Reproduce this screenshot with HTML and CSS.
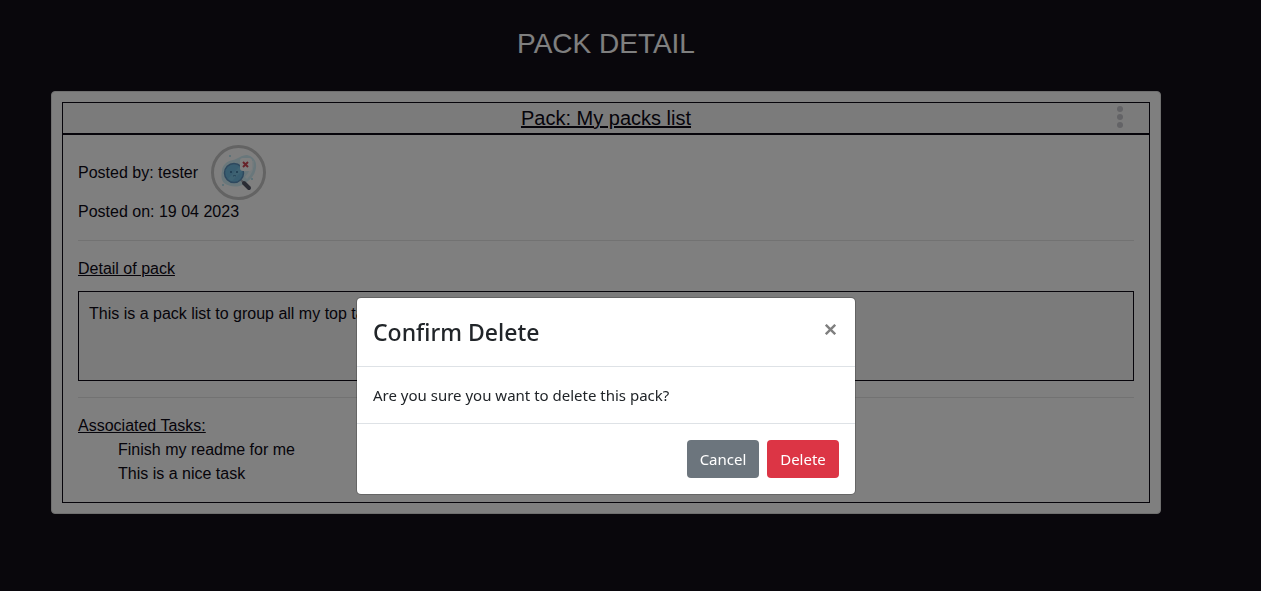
FILE: index.html
```html
<!DOCTYPE html>
<html lang="en">
<head>
<meta charset="utf-8">
<meta name="viewport" content="width=device-width, initial-scale=1">
<title>Pack Detail</title>
<link rel="stylesheet" href="styles.css">
</head>
<body>
<main class="page">
  <h1 class="page-title">PACK DETAIL</h1>
  <section class="card">
    <div class="pack">
      <header class="pack-header">
        <h2 class="pack-title">Pack: My packs list</h2>
        <button class="menu-button" type="button" aria-label="Pack options">
          <svg width="6" height="22" viewBox="0 0 6 22" fill="#c6c6cc"><circle cx="3" cy="3" r="3"/><circle cx="3" cy="11" r="3"/><circle cx="3" cy="19" r="3"/></svg>
        </button>
      </header>
      <div class="pack-body">
        <div class="author">
          <span>Posted by: tester</span>
          <svg class="avatar" viewBox="0 0 49 49" role="img" aria-label="tester">
            <path d="M8 23c0-6 5-10 11-11 5-1 8-5 14-5 6 1 10 6 9 13-1 8-7 13-12 16-6 4-15 3-20-1-3-3-3-8-2-12z" fill="#d3eff7"/>
            <path d="M38 13c1 7-2 13-6 17" fill="none" stroke="#edf9fc" stroke-width="3"/>
            <path d="M27 32l3 3" stroke="#aeb4bd" stroke-width="2"/>
            <path d="M30 35l5 5" stroke="#555869" stroke-width="4" stroke-linecap="round"/>
            <circle cx="20" cy="25" r="9.500" fill="#71bbe0" stroke="#5c91bd" stroke-width="1.500"/>
            <path d="M14 31l11-12 3 4-10 10z" fill="#8ed3ed" opacity=".4"/>
            <circle cx="17" cy="24" r="1" fill="#386f98"/><circle cx="23" cy="24" r="1" fill="#386f98"/>
            <path d="M19 28q2-1 3 0" fill="none" stroke="#4a83ac"/>
            <rect x="26" y="10" width="12" height="13" rx="3" fill="#fff"/>
            <path d="M29 14l5 5m0-5l-5 5" stroke="#cf4555" stroke-width="2"/>
            <g fill="#a6dcec"><circle cx="16" cy="8" r="1"/><circle cx="9" cy="37" r="1"/><circle cx="38" cy="31" r="1"/></g>
          </svg>
        </div>
        <div>Posted on: 19 04 2023</div>
        <hr class="rule">
        <h3 class="label detail-label">Detail of pack</h3>
        <p class="detail">This is a pack list to group all my top tasks</p>
        <hr class="rule">
        <h3 class="label">Associated Tasks:</h3>
        <ul class="tasks">
          <li>Finish my readme for me</li>
          <li>This is a nice task</li>
        </ul>
      </div>
    </div>
  </section>
</main>
<div class="backdrop">
  <div class="modal" role="dialog" aria-modal="true" aria-labelledby="modal-title">
    <header class="modal-header">
      <h2 class="modal-title" id="modal-title">Confirm Delete</h2>
      <button class="close" type="button" aria-label="Close">
        <svg width="11" height="11" viewBox="0 0 11 11" fill="none" stroke="#7f7f7f" stroke-width="2.400"><path d="M.8.8l9.400 9.400M10.200.8L.8 10.200"/></svg>
      </button>
    </header>
    <div class="modal-body">Are you sure you want to delete this pack?</div>
    <footer class="modal-footer">
      <button class="btn btn-secondary" type="button">Cancel</button>
      <button class="btn btn-danger" type="button">Delete</button>
    </footer>
  </div>
</div>
</body>
</html>
```

FILE: styles.css
```css
* { box-sizing: border-box; }
body {
  margin: 0;
  background: #120e19;
  color: #0c0814;
  font: 16px/24px "Liberation Sans", Arial, sans-serif;
}
h1, h2, h3, p, ul { margin: 0; padding: 0; font-weight: 400; }
button { font-family: inherit; cursor: pointer; }

.page { padding: 27px 100px 27px 51px; }
.page-title {
  margin-bottom: 30px;
  color: #fff;
  font-size: 28px;
  line-height: 34px;
  text-align: center;
}
.card {
  max-width: 1110px;
  margin: 0 auto;
  padding: 10px;
  background: #fff;
  border: 1px solid #dfdfdf;
  border-radius: 4px;
}
.pack { border: 1px solid #0c0814; }
.pack-header {
  position: relative;
  padding: 3px 48px;
  background: #f7f7f7;
  border-bottom: 2px solid #0c0814;
  text-align: center;
}
.pack-title { font-size: 20px; text-decoration: underline; }
.menu-button {
  position: absolute;
  top: 0;
  right: 20px;
  height: 28px;
  padding: 0 6px;
  display: flex;
  align-items: center;
  background: none;
  border: 0;
}
.pack-body { padding: 10px 15px 16px; }
.author { display: flex; align-items: center; gap: 13px; }
.avatar {
  width: 55px;
  height: 55px;
  border: 3px solid #c6c6c6;
  border-radius: 50%;
}
.rule { margin: 16px 0; border: 0; border-top: 1px solid #e5e5e5; }
.label { font-size: 16px; text-decoration: underline; }
.detail-label { margin-bottom: 10px; }
.detail {
  min-height: 90px;
  padding: 10px;
  background: #f7f7f7;
  border: 1px solid #0c0814;
}
.tasks { padding-left: 40px; list-style: none; }

.backdrop {
  position: fixed;
  inset: 0;
  display: flex;
  align-items: flex-start;
  justify-content: center;
  padding: 297px 49px 0 0;
  background: rgba(0, 0, 0, .5);
}
.modal {
  width: 500px;
  max-width: 100%;
  background: #fff;
  background-clip: padding-box;
  border: 1px solid rgba(0, 0, 0, .2);
  border-radius: 5px;
  color: #212529;
  font-family: "Noto Sans", sans-serif;
  font-size: 15px;
}
.modal-header {
  display: flex;
  align-items: flex-start;
  justify-content: space-between;
  padding: 16px;
  border-bottom: 1px solid #dee2e6;
}
.modal-title { font-size: 23px; line-height: 36px; font-weight: 500; }
.close { display: flex; padding: 10px 3px; background: none; border: 0; }
.modal-body { padding: 16px; }
.modal-footer {
  display: flex;
  justify-content: flex-end;
  gap: 8px;
  padding: 16px;
  border-top: 1px solid #dee2e6;
}
.btn {
  min-width: 72px;
  height: 38px;
  padding: 0 12px;
  border: 0;
  border-radius: 4px;
  color: #fff;
  font-size: 15px;
}
.btn-secondary { background: #6c757d; }
.btn-danger { background: #dc3545; }
```
